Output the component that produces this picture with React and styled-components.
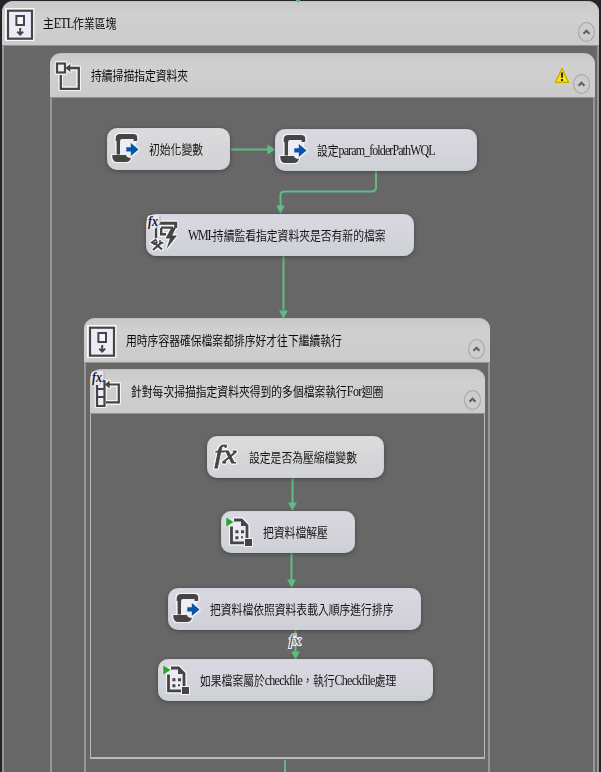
import React from 'react';
import styled, { createGlobalStyle } from 'styled-components';

const GlobalStyle = createGlobalStyle`
  * { box-sizing: border-box; }
  body { margin: 0; background: #24252a; overflow: hidden; }
`;

const INK = '#454545';
const LILAC = '#eeebf7';
const GREEN = '#5fbd83';

const Window = styled.main`
  position: relative;
  width: 601px;
  height: 772px;
  overflow: hidden;
  padding: 1px 2px 0 2px;
  background: #24252a;
`;

const Container = styled.section`
  position: relative;
  display: flex;
  flex-direction: column;
  width: ${(p) => p.$w}px;
  height: ${(p) => p.$h}px;
  flex: none;
  border: solid ${(p) => p.$edge || '#969696'};
  border-width: 0 ${(p) => p.$bw || 2}px ${(p) => (p.$closed ? 2 : 0)}px ${(p) => p.$bw || 2}px;
  border-radius: 12px 12px 0 0;
  background: #676767;
`;

const Header = styled.header`
  display: flex;
  align-items: center;
  height: 45px;
  flex: none;
  margin: 0 -${(p) => p.$bw || 2}px;
  border-radius: 11px 11px 0 0;
  border-top: 1px solid #c0c0c0;
  border-bottom: 1px solid #929292;
  background: linear-gradient(#c9c9c9, #d0d0d0 30%, #cbcbcb);
`;

const Condensed = styled.span`
  display: block;
  font: 400 12.6px/18px 'Liberation Serif', 'Noto Sans CJK TC', serif;
  white-space: nowrap;
  transform: scaleX(0.857);
  transform-origin: 0 50%;
`;

const Title = styled(Condensed)`
  margin-left: ${(p) => p.$x}px;
  color: #0c0c0c;
`;

const Label = styled(Condensed)`
  margin: 2px 0 0 4px;
  color: #151515;
`;

const Latin = styled.span`
  font-size: 14px;
  line-height: 1;
  letter-spacing: ${(p) => p.$ls || -1.05}px;
`;

const Spacer = styled.div`
  flex: 1;
`;

const Toggle = styled.button`
  display: flex;
  align-items: center;
  justify-content: center;
  width: 17px;
  height: 20px;
  padding: 0;
  margin: ${(p) => p.$mt || 16}px ${(p) => p.$mr}px 0 0;
  border: 1px solid #a5a5a5;
  border-radius: 50%;
  background: #cdcdcd;
`;

const Canvas = styled.div`
  position: relative;
  flex: 1;
  display: flex;
  flex-direction: column;
  padding: ${(p) => p.$pad || '0'};
`;

const Node = styled.article`
  position: absolute;
  left: ${(p) => p.$x}px;
  top: ${(p) => p.$y}px;
  width: ${(p) => p.$w}px;
  height: 42px;
  display: flex;
  align-items: center;
  border-radius: 10px;
  background: ${(p) =>
    p.$plain
      ? 'linear-gradient(#dcdcdf, #d6d6d9 50%, #d2d3d6)'
      : 'linear-gradient(#dad7e1, #d5d4dc 50%, #ccd1d5)'};
  box-shadow: 0 1px 4px rgba(40, 40, 40, 0.55), inset 0 0 1px #aaa;
`;

const Drawing = styled.svg`
  flex: none;
  display: block;
  overflow: visible;
`;

const WarningDrawing = styled(Drawing)`
  margin-right: 3px;
`;

const Outlined = styled.g`
  filter: drop-shadow(1px 0 0 #f4f4f4) drop-shadow(-1px 0 0 #f4f4f4) drop-shadow(0 1px 0 #f4f4f4)
    drop-shadow(0 -1px 0 #f4f4f4);
`;

const Edges = styled.svg`
  position: absolute;
  left: 0;
  top: 0;
  overflow: visible;
  pointer-events: none;
`;

const Glyph = styled.text`
  font-family: 'Liberation Serif', serif;
  font-style: italic;
  font-weight: ${(p) => p.$weight || 400};
  font-size: ${(p) => p.$size}px;
`;

function SequenceIcon() {
  return (
    <Drawing width="36" height="44">
      <rect x="3" y="6" width="29.5" height="33" fill="#fafafa" />
      <rect x="6" y="8.7" width="24" height="28" fill={LILAC} stroke={INK} strokeWidth="2.2" />
      <rect x="14.4" y="14" width="7.6" height="9" fill="#f8f6fc" stroke={INK} strokeWidth="2" />
      <path d="M18.2 26V32M15.2 29.6l3 3 3-3" fill="none" stroke={INK} strokeWidth="2" />
    </Drawing>
  );
}

function LoopIcon() {
  return (
    <Drawing width="36" height="44">
      <Outlined>
        <path d="M17 14H28.8V34.8H10.8V21" fill="none" stroke={INK} strokeWidth="2.3" />
        <path d="M15.5 14l4.8-4v8z" fill={INK} />
        <rect x="7" y="9.5" width="8" height="9" fill={LILAC} stroke={INK} strokeWidth="2.2" />
      </Outlined>
    </Drawing>
  );
}

function Badge() {
  return (
    <g>
      <path d="M1 4Q2 1 5 1H14V9L9 15H1Z" fill="#e4e7f3" />
      <path d="M14 1V9L9 15" fill="none" stroke="#a7b4cb" strokeWidth="1" />
      <Glyph x="2" y="12" $size={15} $weight={700} fill="#191919" textLength="10" lengthAdjust="spacingAndGlyphs">fx</Glyph>
    </g>
  );
}

function ForEachIcon() {
  return (
    <Drawing width="36" height="44">
      <Outlined>
        <path d="M17 14.5H28.8V32.3H16" fill="none" stroke={INK} strokeWidth="2.2" />
        <path d="M14.8 14.5l4.8-4v8z" fill={INK} />
        <path d="M7 11h7.5v25H7zM7 19h7.5M7 27h7.5" fill={LILAC} stroke={INK} strokeWidth="2.2" />
      </Outlined>
      <Badge />
    </Drawing>
  );
}

function ScriptIcon() {
  return (
    <Drawing width="38" height="42">
      <Outlined>
        <path d="M12 9H28V22H22V30H11Z" fill="#eeecf5" />
        <path
          d="M8.7 13V10Q9 6 13 6H26Q30.2 6 30.2 9V13H26.6V11H14.6Q13 11 13 13.5V26.5H9.6V13Z"
          fill={INK}
        />
        <path d="M5.2 27H19Q19.5 30 24 29.8Q23 34 19 34H9Q5.2 33 5.2 27Z" fill={INK} />
        <path d="M19.3 19.3H23.8V15L31.6 21.5L23.8 28V23.6H19.3Z" fill="#0755ab" />
      </Outlined>
    </Drawing>
  );
}

function WmiIcon() {
  return (
    <Drawing width="38" height="42">
      <Outlined>
        <path d="M13 9.3H29.7V14" fill="none" stroke={INK} strokeWidth="3" />
        <path d="M10 13V24M15 13.6H27M15.2 14V20.3H20" fill="none" stroke={INK} strokeWidth="2.4" />
        <path d="M25.5 13.5L19.5 24.5H24L20.5 35L31 21.5H26.2L30 13.5Z" fill={INK} />
        <path d="M7.5 28L16 35.5M16 28L7 36" fill="none" stroke={INK} strokeWidth="2.2" />
        <path d="M5.5 28.5l4-2.8 1.5 2.7-2.5 2zM14 26v3h3.5" fill="none" stroke={INK} strokeWidth="1.5" />
      </Outlined>
      <Badge />
    </Drawing>
  );
}

function FxIcon() {
  return (
    <Drawing width="38" height="42">
      <Outlined>
        <Glyph x="7.5" y="27" $size={26} fill={INK} stroke={INK} strokeWidth=".8" textLength="22" lengthAdjust="spacingAndGlyphs">fx</Glyph>
      </Outlined>
    </Drawing>
  );
}

function ProcessIcon() {
  return (
    <Drawing width="38" height="42">
      <Outlined>
        <path d="M10.5 9H21L26 14V32H10.5Z" fill={LILAC} />
        <path d="M10.5 15.5V31.8H23M13 9H20.5L26 14.5V27" fill="none" stroke={INK} strokeWidth="2.8" />
        <path d="M20 8V15H27L21 8Z" fill={INK} />
        <path
          d="M14.4 19.2h3v3h-3zM20 19.2h3v3h-3zM14.4 25.2h3v3h-3zM20 25.2h2v2h-2zM24 28h7v7h-7z"
          fill={INK}
        />
      </Outlined>
      <path d="M5 6L13 11L5 16Z" fill="#2ba32e" stroke="#eef6ee" strokeWidth=".5" />
    </Drawing>
  );
}

function Warning() {
  return (
    <WarningDrawing width="16" height="17" viewBox="0 0 16 17">
      <path d="M8 1.5L14.5 15.2H1.5Z" fill="#f7e817" stroke="#cdb000" strokeWidth="1.5" strokeLinejoin="round" />
      <path d="M8 5.5V10.8M8 12V14" stroke="#33301a" strokeWidth="2.1" />
    </WarningDrawing>
  );
}

function Collapse({ mr, mt }) {
  return (
    <Toggle $mr={mr} $mt={mt} aria-label="collapse">
      <Drawing width="9" height="8" viewBox="0 0 9 8">
        <path d="M1.5 5.7L4.5 2.8L7.5 5.7" fill="none" stroke="#616161" strokeWidth="2.2" />
      </Drawing>
    </Toggle>
  );
}

function Arrow({ d, tip, right }) {
  const [x, y] = tip;
  const head = right ? `M${x} ${y}l-8 -5v10z` : `M${x} ${y}l-4.3 -8.5h8.6z`;
  return (
    <g>
      <path d={d} fill="none" stroke={GREEN} strokeWidth="2" />
      <path d={head} fill={GREEN} />
    </g>
  );
}

function Task({ x, y, w, icon, plain, children }) {
  return (
    <Node $x={x} $y={y} $w={w} $plain={plain}>
      {icon}
      <Label>{children}</Label>
    </Node>
  );
}

function FileLoop() {
  return (
    <Container $w={395} $h={390} $bw={1} $closed $edge="#b9b9b9">
      <Header $bw={1}>
        <ForEachIcon />
        <Title $x={5}>針對每次掃描指定資料夾得到的多個檔案執行<Latin $ls={-0.7}>For</Latin>迴圈</Title>
        <Spacer />
        <Collapse mr={4} />
      </Header>
      <Canvas>
        <Edges width="393" height="343">
          <Arrow d="M201.5 64V92" tip={[201.5, 97]} />
          <Arrow d="M200.5 139V168" tip={[200.5, 174]} />
          <Arrow d="M204.5 216V240" tip={[204.5, 246]} />
          <Glyph x="198" y="231" $size={14} fill="#555" stroke="#f2f2f2" strokeWidth="2" paintOrder="stroke" textLength="12" lengthAdjust="spacingAndGlyphs">fx</Glyph>
        </Edges>
        <Task x={116} y={22} w={177} plain icon={<FxIcon />}>設定是否為壓縮檔變數</Task>
        <Task x={130} y={97} w={134} icon={<ProcessIcon />}>把資料檔解壓</Task>
        <Task x={77} y={174} w={253} icon={<ScriptIcon />}>把資料檔依照資料表載入順序進行排序</Task>
        <Task x={67} y={245} w={275} icon={<ProcessIcon />}>
          如果檔案屬於<Latin $ls={-0.85}>checkfile</Latin>，執行<Latin $ls={-0.85}>Checkfile</Latin>處理
        </Task>
      </Canvas>
    </Container>
  );
}

function SortSequence() {
  return (
    <Container $w={406} $h={460}>
      <Header>
        <SequenceIcon />
        <Title $x={6}>用時序容器確保檔案都排序好才往下繼續執行</Title>
        <Spacer />
        <Collapse mr={5} />
      </Header>
      <Canvas $pad="6px 0 0 4px">
        <FileLoop />
        <Edges width="400" height="410">
          <Arrow d="M199 397V440" tip={[199, 450]} />
        </Edges>
      </Canvas>
    </Container>
  );
}

function WatchFolder() {
  return (
    <Container $w={545} $h={740}>
      <Header>
        <LoopIcon />
        <Title $x={5}>持續掃描指定資料夾</Title>
        <Spacer />
        <Warning />
        <Collapse mr={5} />
      </Header>
      <Canvas $pad="220px 0 0 32px">
        <SortSequence />
        <Edges width="540" height="700">
          <Arrow d="M179 51.5H218" tip={[223.5, 51.5]} right />
          <Arrow d="M324 72V89Q324 93.5 319.5 93.5H232.5Q228.5 93.5 228.5 97V110" tip={[228.5, 116]} />
          <Arrow d="M231.5 158V212" tip={[231.5, 221]} />
        </Edges>
        <Task x={55} y={30} w={123} plain icon={<ScriptIcon />}>初始化變數</Task>
        <Task x={223} y={31} w={202} icon={<ScriptIcon />}>設定<Latin>param_folderPathWQL</Latin></Task>
        <Task x={94} y={116} w={268} icon={<WmiIcon />}><Latin $ls={-1.5}>WMI-</Latin>持續監看指定資料夾是否有新的檔案</Task>
      </Canvas>
    </Container>
  );
}

export default function App() {
  return (
    <>
      <GlobalStyle />
      <Window>
        <Container $w={597} $h={780}>
          <Header>
            <SequenceIcon />
            <Title $x={5}>主<Latin>ETL</Latin>作業區塊</Title>
            <Spacer />
            <Collapse mr={4} />
          </Header>
          <Canvas $pad="7px 0 0 46px">
            <WatchFolder />
          </Canvas>
        </Container>
        <Edges width="601" height="4">
          <path d="M295.5 0H300.5L298 3Z" fill={GREEN} />
        </Edges>
      </Window>
    </>
  );
}
